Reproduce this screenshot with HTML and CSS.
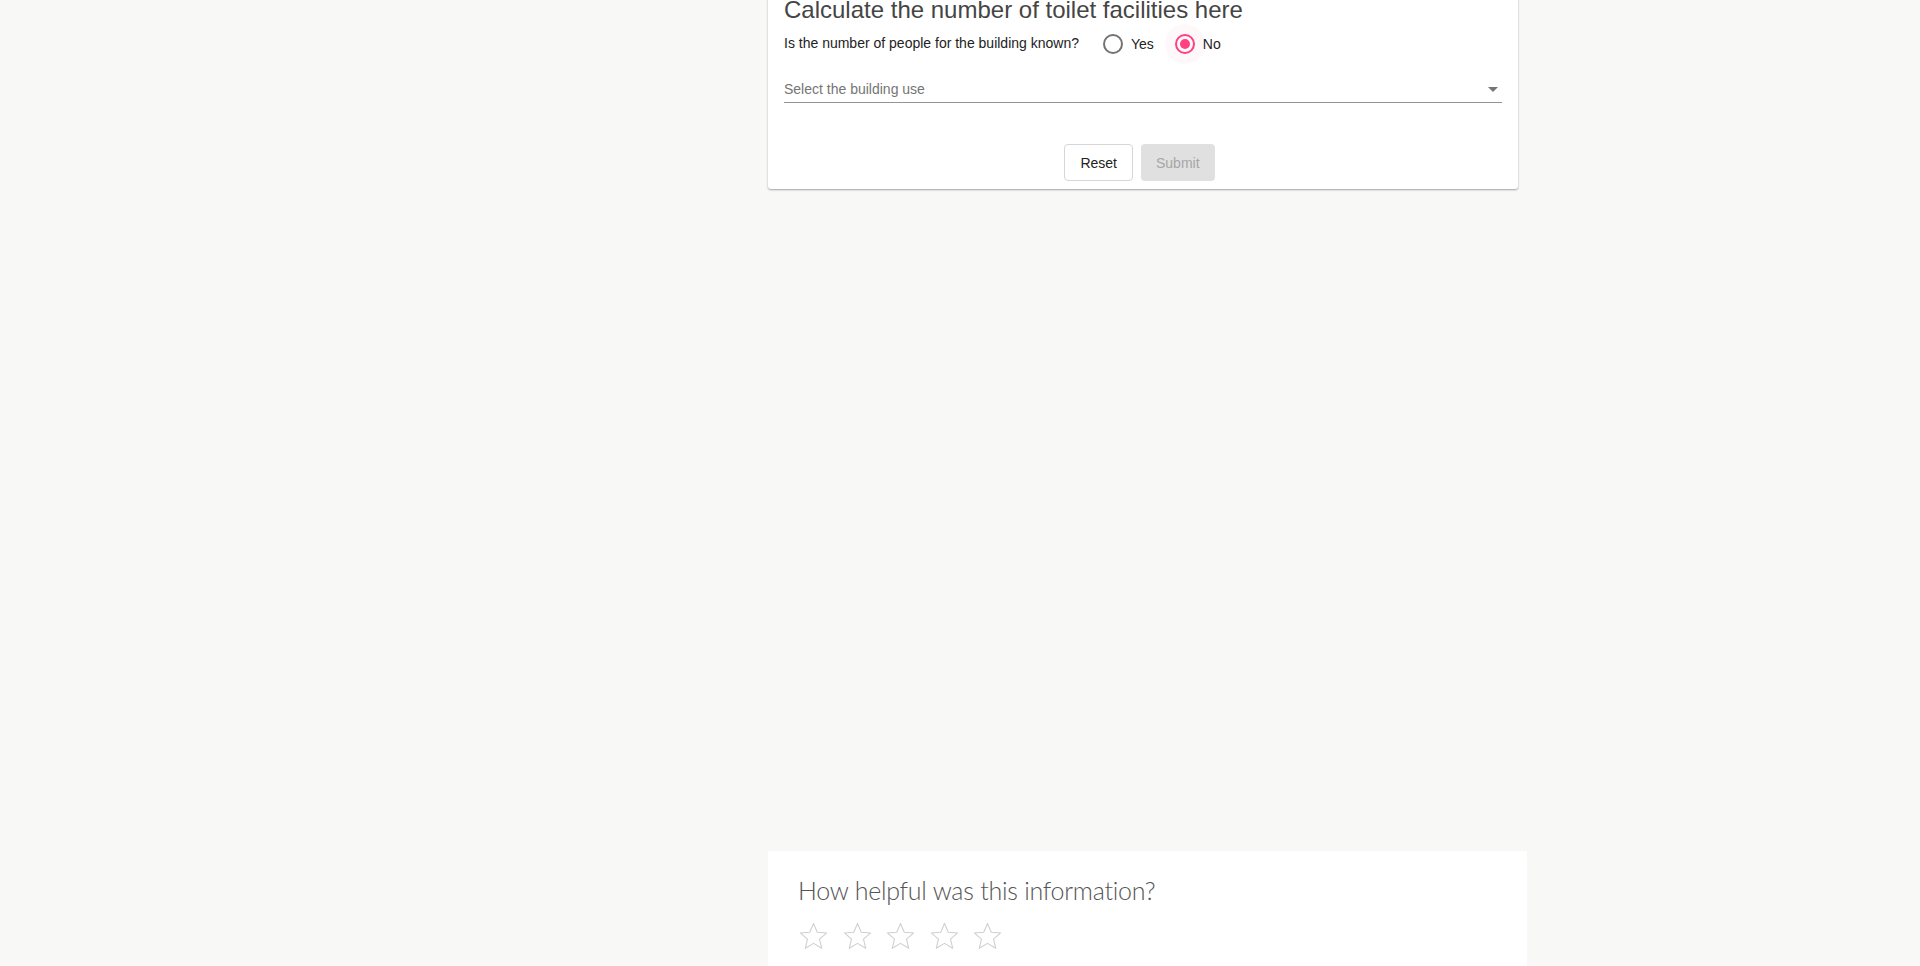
FILE: index.html
```html
<!DOCTYPE html>
<html lang="en">
<head>
<meta charset="utf-8">
<title>Toilet facilities calculator</title>
<link rel="stylesheet" href="styles.css">
</head>
<body>
<div class="page">
  <div class="col-left"></div>
  <div class="col-main">
    <section class="calc-card">
      <h2 class="calc-title">Calculate the number of toilet facilities here</h2>
      <div class="question-row">
        <span class="question">Is the number of people for the building known?</span>
        <label class="radio-opt">
          <span class="radio"></span>
          <span class="radio-label">Yes</span>
        </label>
        <label class="radio-opt">
          <span class="radio checked"><span class="halo"></span><span class="dot"></span></span>
          <span class="radio-label">No</span>
        </label>
      </div>
      <div class="select-field">
        <span class="placeholder">Select the building use</span>
        <span class="arrow"></span>
      </div>
      <div class="actions">
        <button class="btn btn-reset" type="button">Reset</button>
        <button class="btn btn-submit" type="button" disabled>Submit</button>
      </div>
    </section>
    <div class="spacer"></div>
  </div>
</div>
<div class="page">
  <div class="col-left"></div>
  <section class="feedback-card">
    <h3 class="feedback-title">How helpful was this information?</h3>
    <div class="stars">
      <svg class="star" viewBox="0 0 32 32"><path d="M16 2.5 L19.9 11.6 L29.6 12.3 L22.2 18.7 L24.5 28.2 L16 23.1 L7.5 28.2 L9.8 18.7 L2.4 12.3 L12.1 11.6 Z"/></svg>
      <svg class="star" viewBox="0 0 32 32"><path d="M16 2.5 L19.9 11.6 L29.6 12.3 L22.2 18.7 L24.5 28.2 L16 23.1 L7.5 28.2 L9.8 18.7 L2.4 12.3 L12.1 11.6 Z"/></svg>
      <svg class="star" viewBox="0 0 32 32"><path d="M16 2.5 L19.9 11.6 L29.6 12.3 L22.2 18.7 L24.5 28.2 L16 23.1 L7.5 28.2 L9.8 18.7 L2.4 12.3 L12.1 11.6 Z"/></svg>
      <svg class="star" viewBox="0 0 32 32"><path d="M16 2.5 L19.9 11.6 L29.6 12.3 L22.2 18.7 L24.5 28.2 L16 23.1 L7.5 28.2 L9.8 18.7 L2.4 12.3 L12.1 11.6 Z"/></svg>
      <svg class="star" viewBox="0 0 32 32"><path d="M16 2.5 L19.9 11.6 L29.6 12.3 L22.2 18.7 L24.5 28.2 L16 23.1 L7.5 28.2 L9.8 18.7 L2.4 12.3 L12.1 11.6 Z"/></svg>
    </div>
  </section>
</div>
</body>
</html>
```
FILE: styles.css
```css
* { box-sizing: border-box; }
html, body {
  margin: 0;
  padding: 0;
  background: #f8f8f6;
  overflow: hidden;
  height: 966px;
}
body {
  font-family: "Liberation Sans", Arial, sans-serif;
  color: #222;
}
.page {
  display: grid;
  grid-template-columns: 768px auto;
}
.col-main {
  width: 750px;
}
.calc-card {
  margin-top: -4px;
  background: #fff;
  padding: 0 16px 8px 16px;
  border-radius: 0 0 3px 3px;
  box-shadow: 0 1px 2px rgba(0,0,0,0.35);
}
.calc-title {
  margin: 0;
  font-size: 24px;
  line-height: 28px;
  font-weight: 400;
  color: #454545;
}
.question-row {
  display: flex;
  align-items: center;
  margin-top: 10px;
  height: 20px;
  font-size: 14px;
  color: #222;
}
.question {
  margin-right: 24px;
  position: relative;
  top: -1px;
}
.radio-opt {
  display: flex;
  align-items: center;
  margin-right: 21px;
}
.radio {
  position: relative;
  width: 20px;
  height: 20px;
  border: 2px solid #737373;
  border-radius: 50%;
  display: inline-block;
}
.radio.checked {
  border-color: #ff4081;
}
.radio .halo {
  position: absolute;
  left: -12px;
  top: -12px;
  width: 40px;
  height: 40px;
  border-radius: 50%;
  background: rgba(255, 64, 129, 0.035);
}
.radio .dot {
  position: absolute;
  left: 3px;
  top: 3px;
  width: 10px;
  height: 10px;
  border-radius: 50%;
  background: #ff4081;
}
.radio-label {
  margin-left: 8px;
}
.select-field {
  position: relative;
  display: flex;
  align-items: flex-end;
  margin-top: 27px;
  height: 22px;
  padding-bottom: 4px;
  border-bottom: 1px solid #949494;
  font-size: 14px;
}
.placeholder {
  color: #757575;
  line-height: 17px;
}
.arrow {
  position: absolute;
  right: 4px;
  top: 6px;
  width: 0;
  height: 0;
  border-left: 5px solid transparent;
  border-right: 5px solid transparent;
  border-top: 5px solid #757575;
}
.actions {
  display: flex;
  justify-content: center;
  gap: 8px;
  margin-top: 41px;
  padding-right: 7px;
}
.btn {
  height: 37px;
  padding: 0 15px;
  font-family: "Liberation Sans", Arial, sans-serif;
  font-size: 14px;
  border-radius: 4px;
}
.btn-reset {
  background: #fff;
  color: #222;
  border: 1px solid #d6d6d6;
}
.btn-submit {
  background: #e0e0e0;
  color: #a6a6a6;
  border: none;
  padding: 0 15px;
}
.spacer {
  height: 662px;
}
.feedback-card {
  width: 759px;
  height: 200px;
  background: #fff;
  padding: 23px 30px 0 30px;
}
.feedback-title {
  margin: 0;
  font-family: Lato, "Open Sans", sans-serif;
  font-weight: 300;
  font-size: 25px;
  line-height: 32px;
  letter-spacing: -0.25px;
  color: #555;
}
.stars {
  display: flex;
  gap: 12.5px;
  margin-top: 15px;
}
.star {
  width: 31px;
  height: 31px;
  fill: none;
  stroke: #cfcfcf;
  stroke-width: 1.1;
  stroke-linejoin: round;
}
```
